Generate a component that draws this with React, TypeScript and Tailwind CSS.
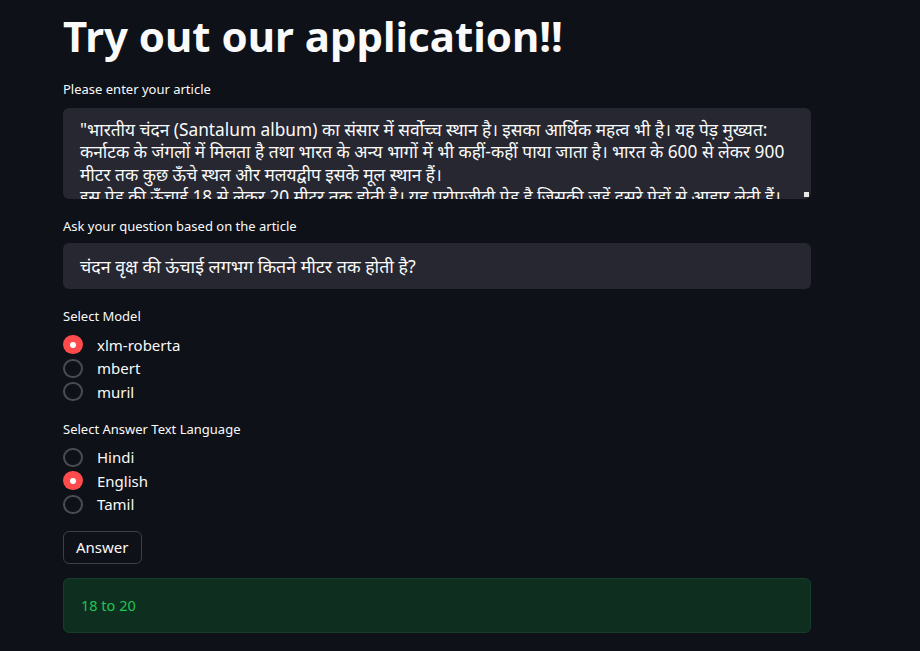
import { useState } from 'react';

const font = "font-['Noto_Sans','Noto_Sans_Devanagari',sans-serif]";

const articleLines = [
  '"भारतीय चंदन (Santalum album) का संसार में सर्वोच्च स्थान है। इसका आर्थिक महत्व भी है। यह पेड़ मुख्यत:',
  'कर्नाटक के जंगलों में मिलता है तथा भारत के अन्य भागों में भी कहीं-कहीं पाया जाता है। भारत के 600 से लेकर 900',
  'मीटर तक कुछ ऊँचे स्थल और मलयद्वीप इसके मूल स्थान हैं।',
  'इस पेड़ की ऊँचाई 18 से लेकर 20 मीटर तक होती है। यह परोपजीवी पेड़ है जिसकी जड़ें दूसरे पेड़ों से आहार लेती हैं।',
];

function Radio({ label, checked, onClick }: { label: string; checked: boolean; onClick: () => void }) {
  return (
    <button onClick={onClick} className="flex items-center h-[23.5px] gap-[14px] text-left">
      {checked ? (
        <span className="w-[20px] h-[19px] rounded-full bg-[#ff4b4b] flex items-center justify-center">
          <span className="w-[6px] h-[6px] rounded-full bg-white" />
        </span>
      ) : (
        <span className="w-[20px] h-[19px] rounded-full border-2 border-[#4a4c54]" />
      )}
      <span className="text-[15px] text-[#fafafa]">{label}</span>
    </button>
  );
}

export default function App() {
  const [model, setModel] = useState('xlm-roberta');
  const [lang, setLang] = useState('English');

  return (
    <div className={`min-h-[651px] bg-[#0e1117] text-[#fafafa] ${font}`}>
      <div className="ml-[63px] w-[748px] pt-[10px]">
        {/* Title */}
        <h1 className="text-[42px] font-bold leading-[52px]">Try out our application!!</h1>

        {/* Article */}
        <label className="block mt-[17px] text-[13px] leading-[20px]">Please enter your article</label>
        <div className="relative mt-[9px] h-[91px] bg-[#262730] rounded-[6px] overflow-hidden">
          <div className="pl-[17px] pr-[20px] pt-[11px] text-[17.3px] leading-[22.3px] whitespace-nowrap">
            {articleLines.map((l, i) => (
              <div key={i}>{l}</div>
            ))}
          </div>
          <span className="absolute right-[2px] bottom-[2px] w-[5px] h-[5px] bg-[#e8e8e8]" />
        </div>

        {/* Question */}
        <label className="block mt-[17px] text-[13px] leading-[20px]">Ask your question based on the article</label>
        <div className="mt-[7px] h-[46px] bg-[#262730] rounded-[6px] flex items-center pl-[17px] text-[17.8px]">
          चंदन वृक्ष की ऊंचाई लगभग कितने मीटर तक होती है?
        </div>

        {/* Model */}
        <label className="block mt-[17px] text-[13px] leading-[20px]">Select Model</label>
        <div className="mt-[7px] flex flex-col">
          {['xlm-roberta', 'mbert', 'muril'].map((m) => (
            <Radio key={m} label={m} checked={model === m} onClick={() => setModel(m)} />
          ))}
        </div>

        {/* Language */}
        <label className="block mt-[15px] text-[13px] leading-[20px]">Select Answer Text Language</label>
        <div className="mt-[7px] flex flex-col">
          {['Hindi', 'English', 'Tamil'].map((m) => (
            <Radio key={m} label={m} checked={lang === m} onClick={() => setLang(m)} />
          ))}
        </div>

        {/* Button */}
        <button className="mt-[15px] h-[33px] px-[12px] border border-[#3d3f47] rounded-[6px] text-[15px] bg-[#0e1117]">
          Answer
        </button>

        {/* Result */}
        <div className="mt-[14px] h-[55px] rounded-[6px] bg-[#0e2f20] border border-[#153d28] flex items-center pl-[17px] text-[14.5px] text-[#21c354]">
          18 to 20
        </div>
      </div>
    </div>
  );
}
